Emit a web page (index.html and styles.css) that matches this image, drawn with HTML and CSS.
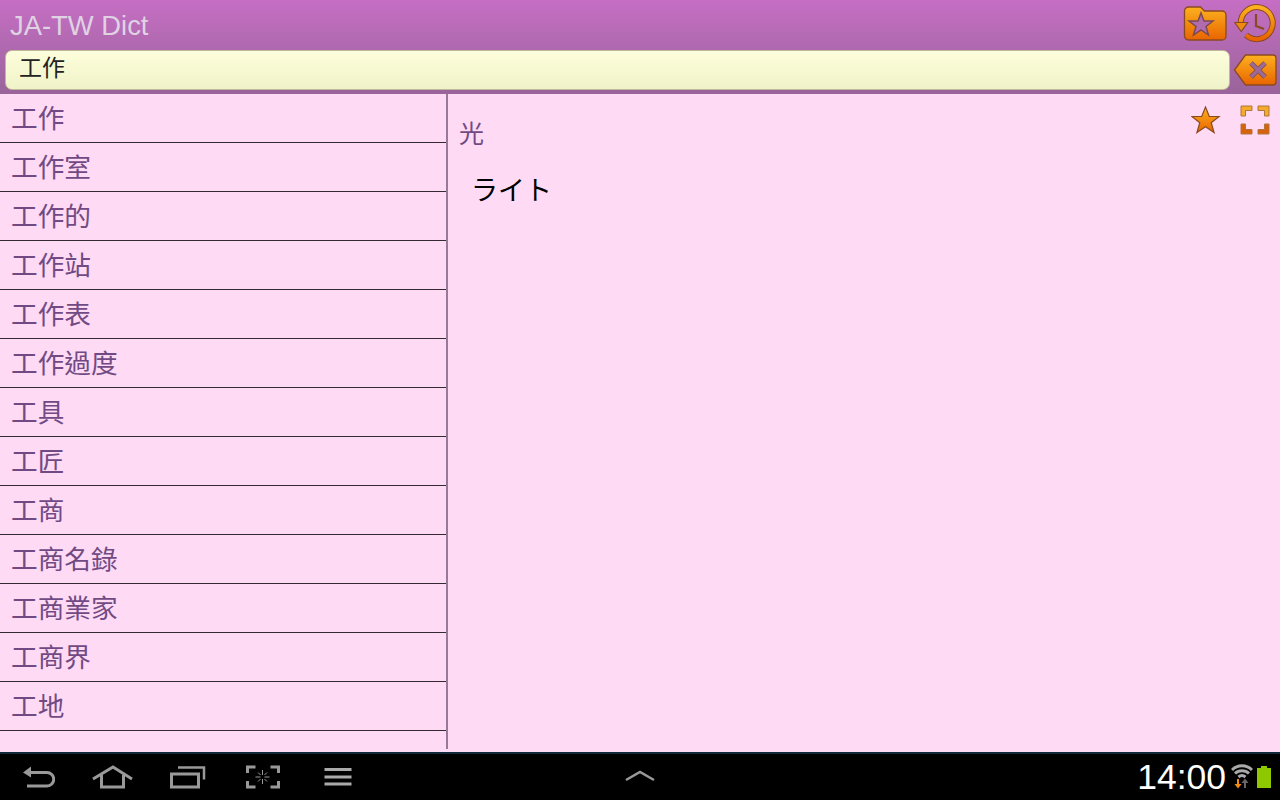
FILE: index.html
```html
<!DOCTYPE html>
<html>
  <head>
    <title>JA-TW Dict</title>
    <link rel="stylesheet" href="styles.css">
  </head>
  <body>
    <div class="header">
      <div class="title-row">
        <div class="app-title">JA-TW Dict</div>
        <div class="title-icons">
          <svg width="44" height="36" viewBox="0 0 44 36">
            <path d="M1.500 6a4 4 0 0 1 4-4h12l4 4h17.500a4 4 0 0 1 4 4v21a4 4 0 0 1-4 4h-33.500a4 4 0 0 1-4-4z" fill="url(#orange)" stroke="#8a4a20" stroke-width="1.300"/>
            <path d="M18 8l3 8h9l-7 5.500 2.500 8.500-7.500-5-7.500 5 2.500-8.500-7-5.500h9z" fill="#b36bb0" stroke="#7a4a50" stroke-width="1.500"/>
          </svg>
          <svg class="icon-history" width="42" height="40" viewBox="0 0 42 40">
            <path d="M6.700 20.300a16 16 0 1 1 5.300 11.700" fill="none" stroke="#8a4a20" stroke-width="6"/>
            <path d="M6.700 20.300a16 16 0 1 1 5.300 11.700" fill="none" stroke="url(#orange)" stroke-width="4"/>
            <path d="M0.700 19.500h13l-6.500 9z" fill="#ee8a10" stroke="#8a4a20" stroke-width="1.200"/>
            <path d="M22 11v12l8 3" fill="none" stroke="#8a4a20" stroke-width="2.200"/>
          </svg>
        </div>
      </div>
      <div class="search-row">
        <div class="search-box">工作</div>
        <svg width="44" height="32" viewBox="0 0 44 32">
          <path d="M1.500 16l11-15h27.500a3 3 0 0 1 3 3v24a3 3 0 0 1-3 3h-27.500z" fill="url(#orange)" stroke="#8a4a20" stroke-width="1.300"/>
          <path d="M18 9l14 14M32 9l-14 14" stroke="#8a4a40" stroke-width="5"/>
          <path d="M18 9l14 14M32 9l-14 14" stroke="#9a6a98" stroke-width="3.500"/>
        </svg>
      </div>
    </div>

    <div class="main">
      <div class="word-list">
        <div class="word-row">工作</div>
        <div class="word-row">工作室</div>
        <div class="word-row">工作的</div>
        <div class="word-row">工作站</div>
        <div class="word-row">工作表</div>
        <div class="word-row">工作過度</div>
        <div class="word-row">工具</div>
        <div class="word-row">工匠</div>
        <div class="word-row">工商</div>
        <div class="word-row">工商名錄</div>
        <div class="word-row">工商業家</div>
        <div class="word-row">工商界</div>
        <div class="word-row">工地</div>
      </div>
      <div class="detail">
        <div class="detail-top">
          <div class="detail-word">光</div>
          <div class="detail-icons">
            <svg width="30" height="28" viewBox="0 0 30 28">
              <path d="M14.500 1l3.800 9.500h9.700l-7.800 6.200 2.900 9.800-8.600-5.800-8.600 5.800 2.900-9.800-7.800-6.200h9.700z" fill="url(#orange)" stroke="#8a4a20" stroke-width="1.200"/>
            </svg>
            <svg class="icon-fullscreen" width="30" height="30" viewBox="0 0 30 30">
              <path d="M1 11v-10h11v4.500h-6.500v5.500zM29 11v-10h-11v4.500h6.500v5.500z" fill="#f5ab2a" stroke="#b0763c" stroke-width="1"/>
              <path d="M1 19v10h11v-4.500h-6.500v-5.500zM29 19v10h-11v-4.500h6.500v-5.500z" fill="#d8620c" stroke="#b0763c" stroke-width="1"/>
            </svg>
          </div>
        </div>
        <div class="detail-text">ライト</div>
      </div>
    </div>

    <div class="nav-bar">
      <div class="nav-left">
        <div class="nav-button">
          <svg width="34" height="24" viewBox="0 0 34 24">
            <path d="M2 7.500l8-6v11z" fill="#999"/>
            <path d="M9 7.500h17a6.500 6.500 0 0 1 0 13.500h-20" fill="none" stroke="#999" stroke-width="3"/>
          </svg>
        </div>
        <div class="nav-button">
          <svg width="42" height="24" viewBox="0 0 42 24">
            <path d="M1 14l20-12 19 12" fill="none" stroke="#999" stroke-width="3"/>
            <path d="M9.500 10v12h22v-12" fill="none" stroke="#999" stroke-width="3"/>
          </svg>
        </div>
        <div class="nav-button">
          <svg width="36" height="24" viewBox="0 0 36 24">
            <path d="M8 2.500h26v12" fill="none" stroke="#999" stroke-width="2.500"/>
            <rect x="1.500" y="9" width="27" height="13" fill="#000" stroke="#999" stroke-width="3"/>
          </svg>
        </div>
        <div class="nav-button">
          <svg width="34" height="24" viewBox="0 0 34 24">
            <path d="M1.500 8v-6h8M24.500 2h8v6M1.500 16v6h8M24.500 22h8v-6" fill="none" stroke="#999" stroke-width="3"/>
            <path d="M16.500 5v5M16.500 14v5M9.500 12h5M18.500 12h5M12 7.500l2.500 2.500M21 7.500l-2.500 2.500M12 16.500l2.500-2.500M21 16.500l-2.500-2.500" stroke="#999" stroke-width="1"/>
          </svg>
        </div>
        <div class="nav-button">
          <svg width="28" height="24" viewBox="0 0 28 24">
            <path d="M0.500 4.500h27M0.500 12h27M0.500 19h27" stroke="#aaa" stroke-width="3"/>
          </svg>
        </div>
      </div>
      <svg class="nav-up" width="30" height="12" viewBox="0 0 30 12">
        <path d="M1 10l14-8 14 8" fill="none" stroke="#999" stroke-width="2.500"/>
      </svg>
      <div class="status">
        <span class="clock">14:00</span>
        <svg width="22" height="26" viewBox="0 0 22 26">
          <path d="M1 6a14 14 0 0 1 20 0M4 9.500a10 10 0 0 1 14 0M7.500 13a5.500 5.500 0 0 1 7 0" fill="none" stroke="#aaa" stroke-width="3"/>
          <path d="M7 15v6" stroke="#f08a10" stroke-width="2"/>
          <path d="M3.500 20h7l-3.500 4.500z" fill="#f08a10"/>
          <path d="M14 24v-6" stroke="#666" stroke-width="2"/>
          <path d="M10.500 19h7l-3.500-4.500z" fill="#666"/>
        </svg>
        <svg width="14" height="22" viewBox="0 0 14 22">
          <path d="M4 0h6v2h4v20h-14v-20h4z" fill="#8dc800"/>
        </svg>
      </div>
    </div>

    <svg class="defs" width="0" height="0">
      <defs>
        <linearGradient id="orange" x1="0" y1="0" x2="0" y2="1">
          <stop offset="0" stop-color="#fdb11f"/>
          <stop offset="1" stop-color="#e86400"/>
        </linearGradient>
      </defs>
    </svg>
  </body>
</html>
```

FILE: styles.css
```css
body {
  font-family: "Liberation Sans", "Noto Sans CJK TC", sans-serif;
  background-color: #fedaf4;
  margin: 0;
  height: 800px;
  overflow: hidden;
  display: flex;
  flex-direction: column;
}
.defs {
  position: absolute;
}

/* Header */
.header {
  height: 94px;
  flex-shrink: 0;
  padding: 3px 3px 4px 5px;
  box-sizing: border-box;
  background: linear-gradient(#c66ec4, #99649a);
  display: flex;
  flex-direction: column;
  justify-content: space-between;
}
.title-row {
  display: flex;
  align-items: center;
  justify-content: space-between;
  height: 40px;
}
.app-title {
  font-size: 27.4px;
  color: #dfd3e3;
  padding: 6px 0 0 5px;
}
.title-icons {
  display: flex;
  align-items: center;
  gap: 7px;
}
.icon-history {
  margin-right: 1px;
}
.search-row {
  display: flex;
  align-items: center;
  justify-content: space-between;
}
.search-box {
  width: 1225px;
  height: 40px;
  box-sizing: border-box;
  padding-left: 13px;
  font-size: 23px;
  line-height: 34px;
  color: #222;
  background: linear-gradient(#fdfedb, #f0f3c8);
  border: 1px solid #c0b89a;
  border-radius: 7px;
}

/* Main */
.main {
  height: 658px;
  flex-shrink: 0;
  display: flex;
}
.word-list {
  width: 446px;
  height: 655px;
  border-right: 2px solid #97799a;
  flex-shrink: 0;
}
.word-row {
  height: 47px;
  padding-top: 1px;
  line-height: 48px;
  padding-left: 11px;
  font-size: 26.67px;
  color: #714a84;
  border-bottom: 1px solid #332a33;
}
.detail {
  flex: 1;
  padding: 12px 10px 0 11px;
}
.detail-top {
  display: flex;
  justify-content: space-between;
  align-items: flex-start;
}
.detail-word {
  font-size: 25px;
  color: #714a84;
  padding-top: 8px;
}
.detail-icons {
  display: flex;
  gap: 19px;
  align-items: flex-start;
}
.icon-fullscreen {
  margin-top: -1px;
}
.detail-text {
  font-size: 27px;
  color: #000;
  padding: 19px 0 0 12px;
}

/* Android nav bar */
.nav-bar {
  height: 48px;
  flex-shrink: 0;
  box-sizing: border-box;
  background-color: #000;
  border-top: 2px solid #10283a;
  display: flex;
  align-items: center;
  justify-content: space-between;
  position: relative;
}
.nav-left {
  display: flex;
  align-items: center;
}
.nav-button {
  width: 75px;
  display: flex;
  justify-content: center;
}
.nav-up {
  position: absolute;
  left: 625px;
  top: 16px;
}
.status {
  display: flex;
  align-items: center;
  gap: 4px;
  padding-right: 9px;
}
.clock {
  font-size: 35.5px;
  color: #fff;
  margin-right: 1px;
}
```
